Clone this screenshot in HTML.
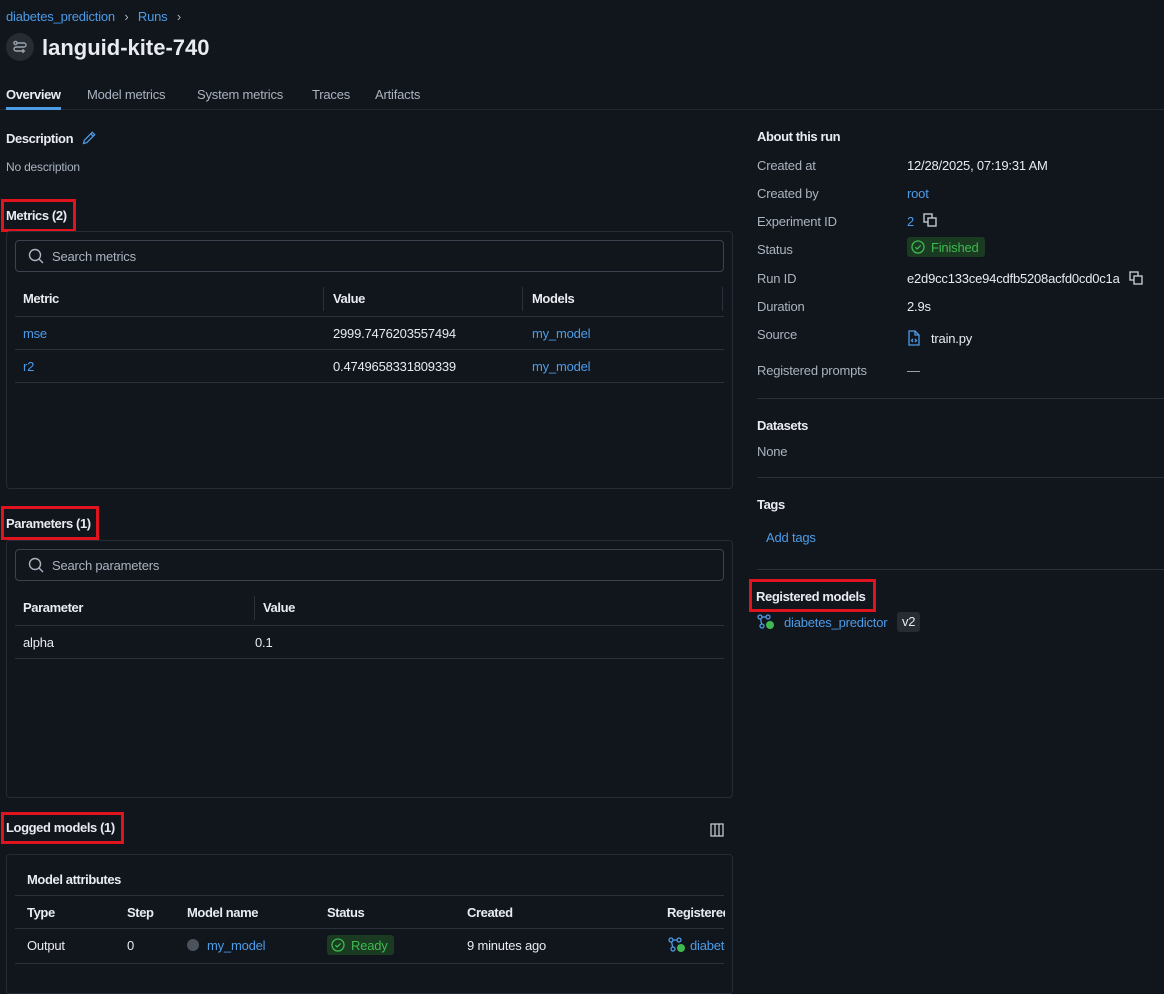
<!DOCTYPE html>
<html><head><meta charset="utf-8">
<style>
*{box-sizing:border-box;margin:0;padding:0}
body{width:1164px;height:978px;background:#11151c;color:#e8ecf0;font-family:"Liberation Sans",sans-serif;font-size:13px;letter-spacing:-0.2px;position:relative;overflow:hidden}
.a{position:absolute;white-space:nowrap;line-height:16px}
.link{color:#4c9ce8}
.mut{color:#aab4bf}
.b{font-weight:bold;letter-spacing:-0.4px}
.red{position:absolute;border:3px solid #e0141e}
.card{position:absolute;border:1px solid #252b34;border-radius:4px}
.search{position:absolute;border:1px solid #3b434e;border-radius:4px}
.hl{position:absolute;height:1px;background:#2a313a}
.vl{position:absolute;width:1px;background:#2a313a}
.badge{position:absolute;background:#1a3a22;color:#3fb950;border-radius:3px;height:20px;padding:0 6px 0 4px;display:flex;align-items:center;white-space:nowrap}
.chk{width:14px;height:14px;margin-right:6px;flex:none}
</style></head><body>

<div class="a link" style="left:6px;top:9px">diabetes_prediction <span class="mut" style="margin:0 6px">›</span> Runs <span class="mut" style="margin-left:6px">›</span></div>
<div class="a" style="left:6px;top:33px;width:28px;height:28px;border-radius:50%;background:#272c33"></div>
<svg class="a" style="left:12px;top:39px" width="16" height="16" viewBox="0 0 16 16" fill="none" stroke="#9aa3ad" stroke-width="1.4"><circle cx="3.5" cy="4" r="1.6"/><path d="M5 4h7a2 2 0 0 1 0 4H4a2 2 0 0 0 0 4h8"/><path d="M10.5 10.3l1.8 1.7-1.8 1.7"/></svg>
<div class="a" style="left:42px;top:35px;font-size:22px;line-height:26px;font-weight:bold;letter-spacing:0">languid-kite-740</div>

<div class="a b" style="left:6px;top:87px">Overview</div>
<div class="a mut" style="left:87px;top:87px">Model metrics</div>
<div class="a mut" style="left:197px;top:87px">System metrics</div>
<div class="a mut" style="left:312px;top:87px">Traces</div>
<div class="a mut" style="left:375px;top:87px">Artifacts</div>
<div class="hl" style="left:0;top:109px;width:1164px;background:#232930"></div>
<div class="a" style="left:6px;top:107px;width:55px;height:3px;background:#4c9ce8"></div>

<div class="a b" style="left:6px;top:131px">Description</div>
<svg class="a" style="left:81px;top:130px" width="16" height="16" viewBox="0 0 16 16" fill="none" stroke="#4c9ce8" stroke-width="1.3"><path d="M2.5 13.5l.8-3.2 8-8 2.4 2.4-8 8z M9.8 3.8l2.4 2.4"/></svg>
<div class="a mut" style="left:6px;top:159px;font-size:12px">No description</div>

<div class="red" style="left:1px;top:199px;width:75px;height:33px"></div>
<div class="a b" style="left:6px;top:208px">Metrics (2)</div>
<div class="card" style="left:6px;top:231px;width:727px;height:258px"></div>
<div class="search" style="left:15px;top:240px;width:709px;height:32px"></div>
<svg class="a" style="left:28px;top:248px" width="16" height="16" viewBox="0 0 16 16" fill="none" stroke="#aab4bf" stroke-width="1.4"><circle cx="7" cy="7" r="5.5"/><path d="M11 11l4 4"/></svg>
<div class="a mut" style="left:52px;top:249px">Search metrics</div>
<div class="a b" style="left:23px;top:291px">Metric</div>
<div class="vl" style="left:323px;top:287px;height:24px"></div>
<div class="a b" style="left:333px;top:291px">Value</div>
<div class="vl" style="left:522px;top:287px;height:24px"></div>
<div class="a b" style="left:532px;top:291px">Models</div>
<div class="vl" style="left:722px;top:287px;height:24px"></div>
<div class="hl" style="left:15px;top:316px;width:709px"></div>
<div class="a link" style="left:23px;top:326px">mse</div>
<div class="a" style="left:333px;top:326px">2999.7476203557494</div>
<div class="a link" style="left:532px;top:326px">my_model</div>
<div class="hl" style="left:15px;top:349px;width:709px"></div>
<div class="a link" style="left:23px;top:359px">r2</div>
<div class="a" style="left:333px;top:359px">0.4749658331809339</div>
<div class="a link" style="left:532px;top:359px">my_model</div>
<div class="hl" style="left:15px;top:382px;width:709px"></div>

<div class="red" style="left:1px;top:506px;width:98px;height:34px"></div>
<div class="a b" style="left:6px;top:516px">Parameters (1)</div>
<div class="card" style="left:6px;top:540px;width:727px;height:258px"></div>
<div class="search" style="left:15px;top:549px;width:709px;height:32px"></div>
<svg class="a" style="left:28px;top:557px" width="16" height="16" viewBox="0 0 16 16" fill="none" stroke="#aab4bf" stroke-width="1.4"><circle cx="7" cy="7" r="5.5"/><path d="M11 11l4 4"/></svg>
<div class="a mut" style="left:52px;top:558px">Search parameters</div>
<div class="a b" style="left:23px;top:600px">Parameter</div>
<div class="vl" style="left:254px;top:596px;height:24px"></div>
<div class="a b" style="left:263px;top:600px">Value</div>
<div class="hl" style="left:15px;top:625px;width:709px"></div>
<div class="a" style="left:23px;top:635px">alpha</div>
<div class="a" style="left:255px;top:635px">0.1</div>
<div class="hl" style="left:15px;top:658px;width:709px"></div>

<div class="red" style="left:1px;top:812px;width:123px;height:32px"></div>
<div class="a b" style="left:6px;top:820px">Logged models (1)</div>
<svg class="a" style="left:710px;top:823px" width="14" height="14" viewBox="0 0 14 14" fill="none" stroke="#c0c7cf" stroke-width="1.3"><rect x="1" y="1" width="12" height="12"/><path d="M5 1v12M9 1v12"/></svg>
<div class="card" style="left:6px;top:854px;width:727px;height:140px"></div>
<div class="a b" style="left:27px;top:872px">Model attributes</div>
<div class="hl" style="left:15px;top:895px;width:709px"></div>
<div class="a b" style="left:27px;top:905px">Type</div>
<div class="a b" style="left:127px;top:905px">Step</div>
<div class="a b" style="left:187px;top:905px">Model name</div>
<div class="a b" style="left:327px;top:905px">Status</div>
<div class="a b" style="left:467px;top:905px">Created</div>
<div class="a b" style="left:667px;top:905px;width:58px;overflow:hidden">Registered</div>
<div class="hl" style="left:15px;top:928px;width:709px"></div>
<div class="a" style="left:27px;top:938px">Output</div>
<div class="a" style="left:127px;top:938px">0</div>
<div class="a" style="left:187px;top:939px;width:12px;height:12px;border-radius:50%;background:#4a525c"></div>
<div class="a link" style="left:207px;top:938px">my_model</div>
<div class="badge" style="left:327px;top:935px"><svg class="chk" viewBox="0 0 14 14" fill="none" stroke="#3fb950" stroke-width="1.3"><circle cx="7" cy="7" r="6"/><path d="M4.3 7.2l1.8 1.8 3.6-3.6"/></svg>Ready</div>
<div class="a" style="left:467px;top:938px">9 minutes ago</div>
<svg class="a" style="left:668px;top:937px" width="18" height="16" viewBox="0 0 18 16" fill="none" stroke="#4c9ce8" stroke-width="1.3"><circle cx="3" cy="3" r="2"/><circle cx="11" cy="3" r="2"/><circle cx="5" cy="12" r="2"/><path d="M5 3h4M3.6 5l1 5"/><circle cx="13" cy="11" r="4" fill="#3fb950" stroke="none"/></svg>
<div class="a link" style="left:690px;top:938px;width:35px;overflow:hidden">diabetes</div>
<div class="hl" style="left:15px;top:963px;width:709px"></div>

<div class="a b" style="left:757px;top:129px">About this run</div>
<div class="a mut" style="left:757px;top:158px">Created at</div><div class="a" style="left:907px;top:158px">12/28/2025, 07:19:31 AM</div>
<div class="a mut" style="left:757px;top:186px">Created by</div><div class="a link" style="left:907px;top:186px">root</div>
<div class="a mut" style="left:757px;top:214px">Experiment ID</div><div class="a link" style="left:907px;top:214px">2</div>
<svg class="a" style="left:923px;top:213px" width="14" height="14" viewBox="0 0 14 14" fill="none" stroke="#c0c7cf" stroke-width="1.4"><rect x="1" y="1" width="8" height="8"/><rect x="5" y="5" width="8" height="8" fill="#11151c"/></svg>
<div class="a mut" style="left:757px;top:242px">Status</div>
<div class="badge" style="left:907px;top:237px"><svg class="chk" viewBox="0 0 14 14" fill="none" stroke="#3fb950" stroke-width="1.3"><circle cx="7" cy="7" r="6"/><path d="M4.3 7.2l1.8 1.8 3.6-3.6"/></svg>Finished</div>
<div class="a mut" style="left:757px;top:271px">Run ID</div><div class="a" style="left:907px;top:271px">e2d9cc133ce94cdfb5208acfd0cd0c1a</div>
<svg class="a" style="left:1129px;top:271px" width="14" height="14" viewBox="0 0 14 14" fill="none" stroke="#c0c7cf" stroke-width="1.4"><rect x="1" y="1" width="8" height="8"/><rect x="5" y="5" width="8" height="8" fill="#11151c"/></svg>
<div class="a mut" style="left:757px;top:299px">Duration</div><div class="a" style="left:907px;top:299px">2.9s</div>
<div class="a mut" style="left:757px;top:327px">Source</div>
<svg class="a" style="left:907px;top:330px" width="14" height="16" viewBox="0 0 14 16" fill="none" stroke="#4c9ce8" stroke-width="1.3"><path d="M2 1h6l4 4v10H2z M8 1v4h4"/><path d="M6 9l-1.5 1.5L6 12M8 9l1.5 1.5L8 12"/></svg>
<div class="a" style="left:931px;top:331px">train.py</div>
<div class="a mut" style="left:757px;top:363px">Registered prompts</div><div class="a mut" style="left:907px;top:363px">—</div>
<div class="hl" style="left:757px;top:398px;width:407px"></div>
<div class="a b" style="left:757px;top:418px">Datasets</div>
<div class="a mut" style="left:757px;top:444px">None</div>
<div class="hl" style="left:757px;top:477px;width:407px"></div>
<div class="a b" style="left:757px;top:497px">Tags</div>
<div class="a link" style="left:766px;top:530px">Add tags</div>
<div class="hl" style="left:757px;top:569px;width:407px"></div>
<div class="red" style="left:749px;top:579px;width:127px;height:33px"></div>
<div class="a b" style="left:756px;top:589px">Registered models</div>
<svg class="a" style="left:757px;top:614px" width="18" height="16" viewBox="0 0 18 16" fill="none" stroke="#4c9ce8" stroke-width="1.3"><circle cx="3" cy="3" r="2"/><circle cx="11" cy="3" r="2"/><circle cx="5" cy="12" r="2"/><path d="M5 3h4M3.6 5l1 5"/><circle cx="13" cy="11" r="4" fill="#3fb950" stroke="none"/></svg>
<div class="a link" style="left:784px;top:615px">diabetes_predictor</div>
<div class="a" style="left:897px;top:612px;height:20px;line-height:20px;padding:0 5px;background:#272c33;border-radius:3px">v2</div>
</body></html>
